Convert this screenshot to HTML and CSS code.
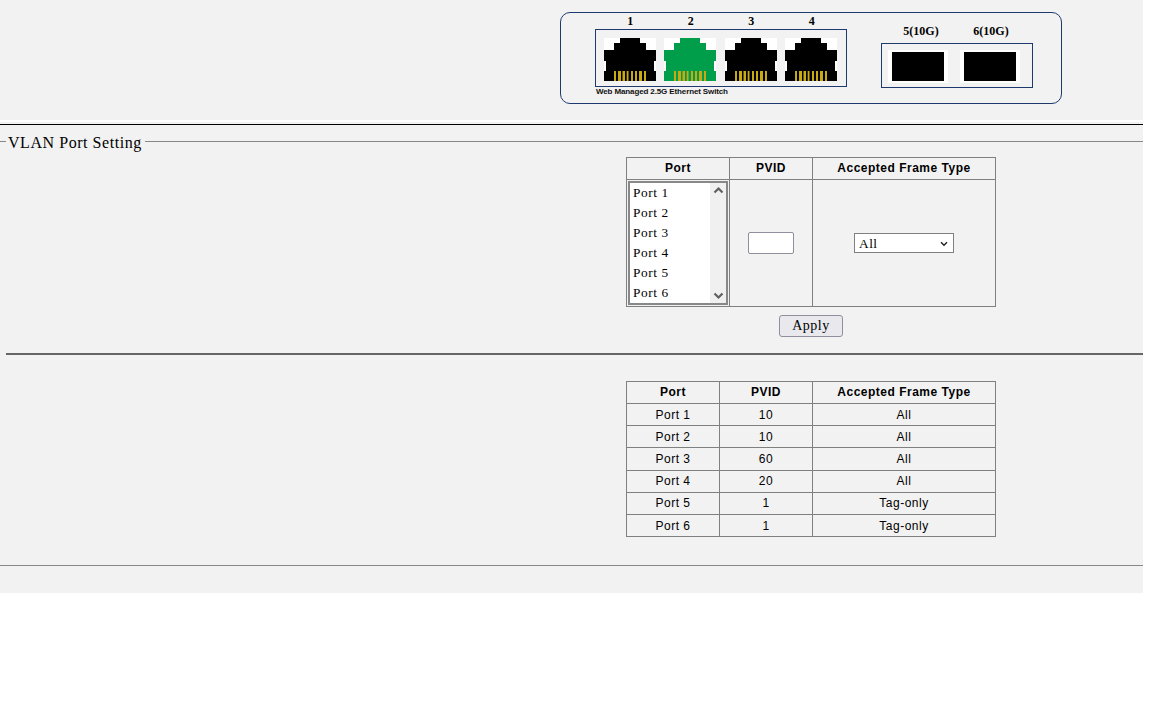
FILE: index.html
```html
<!DOCTYPE html>
<html lang="en">
<head>
<meta charset="utf-8">
<title>VLAN Port Setting</title>
<link rel="stylesheet" href="styles.css">
</head>
<body>
<svg class="defs" width="0" height="0" aria-hidden="true">
  <defs>
    <g id="rj45">
      <rect width="52" height="43" fill="#fff"/>
      <path class="plug" d="M16 0H36V5H42V12H52V23H50V33H52V43H0V33H2V23H0V12H10V5H16Z"/>
      <g fill="#c9aa12">
        <rect x="10" y="33" width="2" height="10"/><rect x="14" y="33" width="3" height="10"/>
        <rect x="18.5" y="33" width="2.5" height="10"/><rect x="22.7" y="33" width="1.8" height="10"/>
        <rect x="27" y="33" width="2" height="10"/><rect x="31" y="33" width="2" height="10"/>
        <rect x="35" y="33" width="3" height="10"/><rect x="40" y="33" width="2" height="10"/>
      </g>
    </g>
  </defs>
</svg>
<div class="page">
  <header class="top">
    <div class="panel">
      <div class="group group-copper">
        <div class="labels labels-copper"><span>1</span><span>2</span><span>3</span><span>4</span></div>
        <div class="ports ports-copper">
          <svg class="rj" viewBox="0 0 52 43"><use href="#rj45"/></svg>
          <svg class="rj up" viewBox="0 0 52 43"><use href="#rj45"/></svg>
          <svg class="rj wide-gap" viewBox="0 0 52 43"><use href="#rj45"/></svg>
          <svg class="rj" viewBox="0 0 52 43"><use href="#rj45"/></svg>
        </div>
        <div class="caption">Web Managed 2.5G Ethernet Switch</div>
      </div>
      <div class="group group-sfp">
        <div class="labels labels-sfp"><span>5(10G)</span><span>6(10G)</span></div>
        <div class="ports ports-sfp">
          <div class="sfp"><i></i></div>
          <div class="sfp"><i></i></div>
        </div>
      </div>
    </div>
  </header>
  <div class="rule-white"></div>
  <div class="rule-top"></div>
  <fieldset class="setting">
    <legend>VLAN Port Setting</legend>
    <div class="center-col">
      <table class="grid form-table">
        <tr class="head"><th class="c1">Port</th><th class="c2">PVID</th><th class="c3">Accepted Frame Type</th></tr>
        <tr class="form-row">
          <td class="list-cell">
            <div class="listbox">
              <ul>
                <li>Port 1</li><li>Port 2</li><li>Port 3</li><li>Port 4</li><li>Port 5</li><li>Port 6</li>
              </ul>
              <div class="scroll">
                <svg width="11" height="8" viewBox="0 0 11 8"><path d="M1.5 6.5 5.5 2.5 9.5 6.5" fill="none" stroke="#606060" stroke-width="2.2"/></svg>
                <svg width="11" height="8" viewBox="0 0 11 8"><path d="M1.5 1.5 5.5 5.5 9.5 1.5" fill="none" stroke="#606060" stroke-width="2.2"/></svg>
              </div>
            </div>
          </td>
          <td><input class="pvid" type="text"></td>
          <td>
            <div class="frame-wrap">
              <select class="frame"><option>All</option></select>
              <svg class="chev" width="8" height="6" viewBox="0 0 8 6"><path d="M1 1.2 4 4.2 7 1.2" fill="none" stroke="#222" stroke-width="1.4"/></svg>
            </div>
          </td>
        </tr>
      </table>
      <div class="actions"><button class="apply" type="button">Apply</button></div>
    </div>
    <div class="divider"></div>
    <div class="center-col">
      <table class="grid data-table">
        <tr class="head"><th class="d1">Port</th><th class="d2">PVID</th><th class="d3">Accepted Frame Type</th></tr>
        <tr><td>Port 1</td><td>10</td><td>All</td></tr>
        <tr><td>Port 2</td><td>10</td><td>All</td></tr>
        <tr class="tall"><td>Port 3</td><td>60</td><td>All</td></tr>
        <tr class="nudge"><td>Port 4</td><td>20</td><td>All</td></tr>
        <tr class="nudge"><td>Port 5</td><td>1</td><td>Tag-only</td></tr>
        <tr><td>Port 6</td><td>1</td><td>Tag-only</td></tr>
      </table>
    </div>
  </fieldset>
</div>
</body>
</html>
```
FILE: styles.css
```css
html, body { margin: 0; padding: 0; background: #fff; }
.defs { position: absolute; }
.page {
  width: 1143px;
  height: 593px;
  background: #f2f2f2;
  overflow: hidden;
  font-family: "Liberation Serif", serif;
  color: #000;
}
.top { height: 120px; padding-top: 12px; box-sizing: border-box; }
.panel {
  margin-left: 560px;
  width: 502px;
  height: 92px;
  box-sizing: border-box;
  border: 1px solid #1f3a6e;
  border-radius: 10px;
  display: flex;
  align-items: flex-start;
  padding-left: 34px;
}
.group { display: flex; flex-direction: column; }
.group-copper { width: 252px; margin-top: 1px; }
.group-sfp { width: 152px; margin-left: 34px; margin-top: 11px; }
.labels {
  display: flex;
  font-weight: bold;
  font-size: 12px;
  line-height: 14px;
  text-align: center;
}
.labels-copper { padding-left: 5px; height: 15px; }
.labels-copper span { width: 60.5px; }
.labels-sfp { padding-left: 5px; }
.labels-sfp span { width: 70px; }
.ports { border: 1px solid #1f3a6e; box-sizing: border-box; display: flex; }
.ports-copper { height: 58px; width: 252px; gap: 8px; padding: 8px 0 0 8px; }
.ports-sfp { height: 45px; width: 152px; gap: 12px; padding: 6px 0 0 6px; margin-top: 5px; }
.rj { width: 52px; height: 43px; display: block; flex: none; color: #000; }
.rj.up { color: #009e4a; }
.rj.wide-gap { margin-left: 1px; }
.plug { fill: currentColor; }
.sfp {
  width: 60px;
  height: 33px;
  background: #fff;
  display: flex;
  align-items: center;
  justify-content: center;
}
.sfp i { display: block; width: 52px; height: 29px; background: #000; }
.caption {
  font-family: "Liberation Sans", sans-serif;
  font-size: 8px;
  font-weight: bold;
  line-height: 9px;
  letter-spacing: -0.125px;
  color: #111;
  padding-left: 1px;
}
.rule-white { height: 2px; background: #fff; margin-bottom: 2px; }
.rule-top { height: 1px; background: #000; }
.setting {
  margin: 5px 0 0;
  padding: 0;
  min-width: 0;
  border: 0;
  border-top: 1px solid #888;
  border-bottom: 1px solid #888;
  height: 436px;
  box-sizing: border-box;
}
legend {
  margin-left: 6px;
  padding: 4px 3px 0 2px;
  font-size: 16px;
  line-height: 18px;
  letter-spacing: 0.55px;
}
.center-col { padding-left: 626px; }
.grid {
  border-collapse: collapse;
  font-family: "Liberation Sans", sans-serif;
  font-size: 12px;
  letter-spacing: 0.5px;
  text-align: center;
}
.grid th, .grid td { border: 1px solid #808080; padding: 0; }
.grid th { font-weight: bold; padding-bottom: 2px; box-sizing: border-box; }
.form-table { margin-top: 5px; }
.form-table .head th { height: 22px; }
.c1 { width: 103px; }
.c2 { width: 83px; }
.c3 { width: 183px; }
.form-row td { height: 126px; }
.list-cell { vertical-align: middle; }
.listbox {
  width: 96px;
  height: 120px;
  margin: 0 auto;
  border: 2px solid #888;
  background: #fff;
  display: flex;
  font-family: "Liberation Serif", serif;
  font-size: 13.33px;
  letter-spacing: 0.6px;
  text-align: left;
}
.listbox ul { flex: 1; margin: 0; padding: 0 0 0 3px; list-style: none; }
.listbox li { height: 20px; line-height: 20px; }
.scroll {
  width: 16px;
  background: #f0f0f0;
  display: flex;
  flex-direction: column;
  justify-content: space-between;
  align-items: center;
  padding: 3px 0;
  box-sizing: border-box;
}
.scroll svg { display: block; }
.pvid {
  width: 46px;
  height: 22px;
  box-sizing: border-box;
  border: 1px solid #8f8f9d;
  border-radius: 2px;
  background: #fff;
  padding: 0;
  display: block;
  margin: 0 0 0 18px;
}
.frame-wrap { position: relative; width: 100px; height: 20px; margin: 0 0 0 41px; }
.frame {
  width: 100px;
  height: 20px;
  box-sizing: border-box;
  border: 1px solid #808080;
  border-radius: 0;
  background: #fff;
  appearance: none;
  padding: 0 0 0 4px;
  font-family: "Liberation Serif", serif;
  font-size: 13.33px;
  letter-spacing: 0.5px;
  display: block;
}
.chev { position: absolute; right: 6px; top: 8px; pointer-events: none; }
.actions { width: 370px; text-align: center; margin-top: 8px; }
.apply {
  width: 64px;
  height: 22px;
  box-sizing: border-box;
  border: 1px solid #8f8f9d;
  border-radius: 3px;
  background: #e9e9ed;
  font-family: "Liberation Serif", serif;
  font-size: 14px;
  letter-spacing: 0.5px;
  padding: 0;
}
.divider { height: 2px; background: #666; margin: 16px 0 26px 6px; }
.data-table .head th { height: 22px; }
.data-table td { height: 21px; }
.data-table .tall td { height: 22px; }
.data-table .nudge td { height: 22px; padding-bottom: 2px; box-sizing: border-box; }
.d1 { width: 93px; }
.d2 { width: 93px; }
.d3 { width: 183px; }
```
